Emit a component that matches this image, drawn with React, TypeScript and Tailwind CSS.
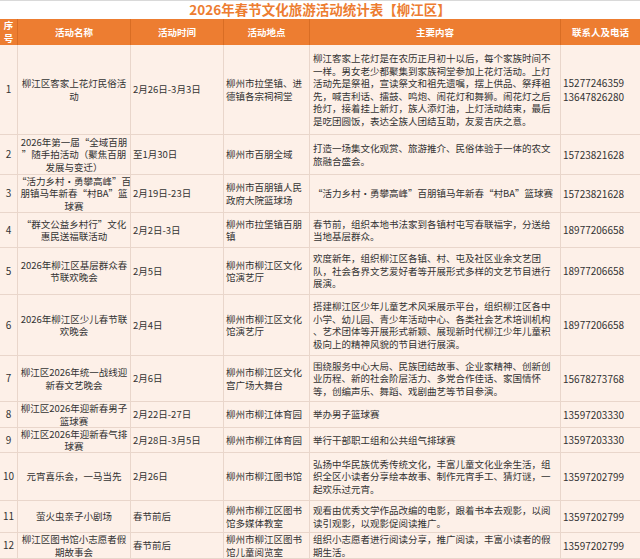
const cols = 'grid grid-cols-[18px_113px_93px_86px_251px_79px]'

type Row = {
  no: string
  name: string[]
  time: string
  place: string[]
  content: string[]
  phone: string[]
  h: string
}

const rows: Row[] = [
  {
    no: '1',
    name: ['柳江区客家上花灯民俗活', '动'],
    time: '2月26日-3月3日',
    place: ['柳州市拉堡镇、进', '德镇各宗祠祠堂'],
    content: [
      '柳江客家上花灯是在农历正月初十以后，每个家族时间不',
      '一样。男女老少都聚集到家族祠堂参加上花灯活动。上灯',
      '活动先是祭祖，宣读祭文和祖先遗嘱，摆上供品、祭拜祖',
      '先，喊吉利话、擂鼓、鸣炮、闹花灯和舞狮。闹花灯之后',
      '抢灯，接着挂上新灯，族人添灯油，上灯活动结束，最后',
      '是吃团圆饭，表达全族人团结互助，友爱吉庆之意。',
    ],
    phone: ['15277246359', '13647826280'],
    h: 'h-[90px]',
  },
  {
    no: '2',
    name: ['2026年第一届“全域百朋', '”随手拍活动（聚焦百朋', '发展与变迁）'],
    time: '至1月30日',
    place: ['柳州市百朋全域'],
    content: ['打造一场集文化观赏、旅游推介、民俗体验于一体的农文', '旅融合盛会。'],
    phone: ['15723821628'],
    h: 'h-[40px]',
  },
  {
    no: '3',
    name: ['“活力乡村·勇攀高峰”百', '朋镇马年新春“村BA”篮', '球赛'],
    time: '2月19日-23日',
    place: ['柳州市百朋镇人民', '政府大院篮球场'],
    content: ['“活力乡村·勇攀高峰”百朋镇马年新春“村BA”篮球赛'],
    phone: ['15723821628'],
    h: 'h-[38px]',
  },
  {
    no: '4',
    name: ['“群文公益乡村行”文化', '惠民送福联活动'],
    time: '2月2日-3日',
    place: ['柳州市拉堡镇百朋', '镇'],
    content: ['春节前，组织本地书法家到各镇村屯写春联福字，分送给', '当地基层群众。'],
    phone: ['18977206658'],
    h: 'h-[35px]',
  },
  {
    no: '5',
    name: ['2026年柳江区基层群众春', '节联欢晚会'],
    time: '2月5日',
    place: ['柳州市柳江区文化', '馆演艺厅'],
    content: [
      '欢度新年，组织柳江区各镇、村、屯及社区业余文艺团',
      '队，社会各界文艺爱好者等开展形式多样的文艺节目进行',
      '展演。',
    ],
    phone: ['18977206658'],
    h: 'h-[47px]',
  },
  {
    no: '6',
    name: ['2026年柳江区少儿春节联', '欢晚会'],
    time: '2月4日',
    place: ['柳州市柳江区文化', '馆演艺厅'],
    content: [
      '搭建柳江区少年儿童艺术风采展示平台，组织柳江区各中',
      '小学、幼儿园、青少年活动中心、各类社会艺术培训机构',
      '、艺术团体等开展形式新颖、展现新时代柳江少年儿童积',
      '极向上的精神风貌的节目进行展演。',
    ],
    phone: ['18977206658'],
    h: 'h-[61px]',
  },
  {
    no: '7',
    name: ['柳江区2026年统一战线迎', '新春文艺晚会'],
    time: '2月6日',
    place: ['柳州市柳江区文化', '宫广场大舞台'],
    content: [
      '围绕服务中心大局、民族团结故事、企业家精神、创新创',
      '业历程、新的社会阶层活力、多党合作佳话、家国情怀',
      '等，创编声乐、舞蹈、戏剧曲艺等节目参演。',
    ],
    phone: ['15678273768'],
    h: 'h-[46px]',
  },
  {
    no: '8',
    name: ['柳江区2026年迎新春男子', '篮球赛'],
    time: '2月22日-27日',
    place: ['柳州市柳江体育园'],
    content: ['举办男子篮球赛'],
    phone: ['13597203330'],
    h: 'h-[26px]',
  },
  {
    no: '9',
    name: ['柳江区2026年迎新春气排', '球赛'],
    time: '2月28日-3月5日',
    place: ['柳州市柳江体育园'],
    content: ['举行干部职工组和公共组气排球赛'],
    phone: ['13597203330'],
    h: 'h-[25px]',
  },
  {
    no: '10',
    name: ['元宵喜乐会，一马当先'],
    time: '2月26日',
    place: ['柳州市柳江图书馆'],
    content: [
      '弘扬中华民族优秀传统文化，丰富儿童文化业余生活，组',
      '织全区小读者分享绘本故事、制作元宵手工、猜灯谜，一',
      '起欢乐过元宵。',
    ],
    phone: ['13597202799'],
    h: 'h-[48px]',
  },
  {
    no: '11',
    name: ['萤火虫亲子小剧场'],
    time: '春节前后',
    place: ['柳州市柳江区图书', '馆多媒体教室'],
    content: ['观看由优秀文学作品改编的电影，跟着书本去观影，以阅', '读引观影，以观影促阅读推广。'],
    phone: ['13597202799'],
    h: 'h-[32px]',
  },
  {
    no: '12',
    name: ['柳江区图书馆小志愿者假', '期故事会'],
    time: '春节前后',
    place: ['柳州市柳江区图书', '馆儿童阅览室'],
    content: ['组织小志愿者进行阅读分享，推广阅读，丰富小读者的假', '期生活。'],
    phone: ['13597202799'],
    h: 'h-[26px]',
  },
]

function Lines({ items }: { items: string[] }) {
  return (
    <>
      {items.map((t, i) => (
        <div key={i} className="whitespace-nowrap">
          {t}
        </div>
      ))}
    </>
  )
}

const cell = 'flex flex-col justify-center border-r border-b border-[#e9d6cb] overflow-hidden'

export default function App() {
  return (
    <div className="w-[640px] h-[559px] overflow-hidden bg-[#fdf0e8] text-[#333] font-['Noto_Sans_CJK_SC','Noto_Sans',sans-serif] text-[9.5px] leading-[12.5px]">
      <div className="h-[19px] bg-white border-t border-[#d9d9d9] flex items-center justify-center text-[13.5px] font-bold text-[#ed7d31] leading-none">
        2026年春节文化旅游活动统计表【柳江区】
      </div>
      <div className={`${cols} h-[26px] bg-[#ed7d31] text-white font-bold`}>
        <div className="flex flex-col items-center justify-center border-r border-[#d96d24] leading-[13px]">
          <span>序</span>
          <span>号</span>
        </div>
        <div className="flex items-center justify-center border-r border-[#d96d24]">活动名称</div>
        <div className="flex items-center justify-center border-r border-[#d96d24]">活动时间</div>
        <div className="flex items-center justify-center border-r border-[#d96d24]">活动地点</div>
        <div className="flex items-center justify-center border-r border-[#d96d24]">主要内容</div>
        <div className="flex items-center justify-center">联系人及电话</div>
      </div>
      {rows.map((r) => (
        <div key={r.no} className={`${cols} ${r.h}`}>
          <div className={`${cell} items-center text-[10px]`}>{r.no}</div>
          <div className={`${cell} items-center text-center`}>
            <Lines items={r.name} />
          </div>
          <div className={`${cell} pl-[2px]`}>{r.time}</div>
          <div className={`${cell} pl-[2px]`}>
            <Lines items={r.place} />
          </div>
          <div className={`${cell} pl-[3px]`}>
            <Lines items={r.content} />
          </div>
          <div className={`${cell} pl-[2px] border-r-0 text-[10px] leading-[14px]`}>
            <Lines items={r.phone} />
          </div>
        </div>
      ))}
    </div>
  )
}
